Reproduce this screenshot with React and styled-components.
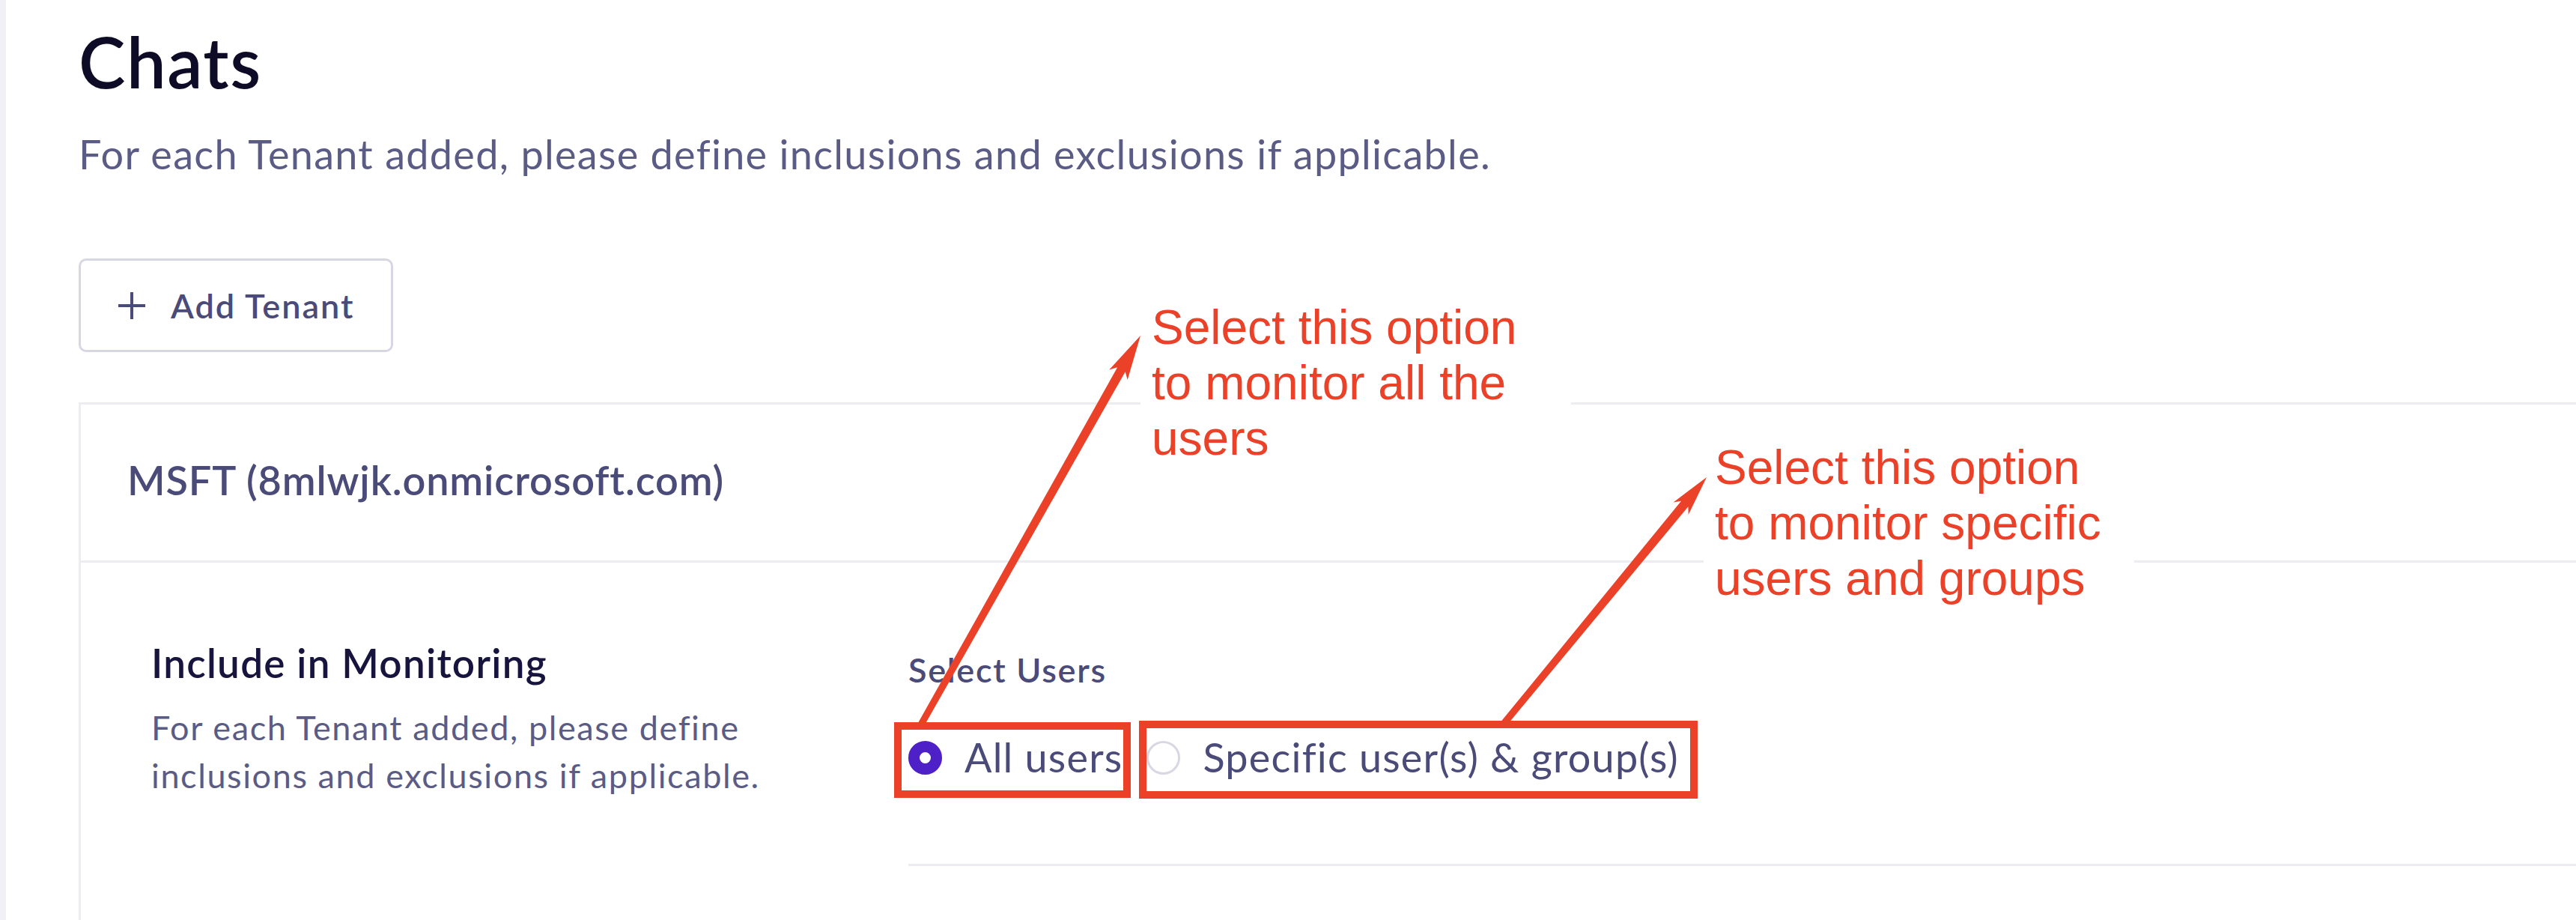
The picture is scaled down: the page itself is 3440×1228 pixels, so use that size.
import React from "react";
import styled, { createGlobalStyle } from "styled-components";

const GlobalStyle = createGlobalStyle`
  html, body { margin: 0; padding: 0; background: #ffffff; }
  body { font-family: "Lato", "Open Sans", sans-serif; -webkit-font-smoothing: antialiased; }
  * { box-sizing: border-box; }
`;

const Root = styled.div`
  position: relative;
  display: flex;
  width: 100%;
  height: 1228px;
  overflow: hidden;
  background: #ffffff;
`;

const SideStrip = styled.div`
  flex: 0 0 8px;
  background: #f0f0f6;
`;

const Main = styled.main`
  flex: 1;
  display: flex;
  flex-direction: column;
  align-items: flex-start;
  padding: 28px 0 0 97px;
  & > * { flex-shrink: 0; }
`;

const Title = styled.h1`
  margin: 0;
  font-size: 94px;
  line-height: 108px;
  letter-spacing: 1.5px;
  font-weight: 600;
  color: #0e0b26;
`;

const Subtitle = styled.p`
  margin: 39px 0 0;
  font-size: 54px;
  line-height: 62px;
  letter-spacing: 1.3px;
  font-weight: 400;
  color: #5b5c85;
`;

const AddButton = styled.button`
  margin-top: 108px;
  width: 420px;
  height: 125px;
  display: flex;
  align-items: center;
  gap: 33px;
  padding: 0 0 0 49px;
  background: #ffffff;
  border: 3px solid #d7d7e4;
  border-radius: 10px;
  font-family: inherit;
  font-size: 45px;
  letter-spacing: 2px;
  font-weight: 600;
  color: #4a4b79;
  cursor: pointer;
`;

const Card = styled.section`
  margin-top: 67px;
  align-self: stretch;
  background: #ffffff;
  border: 3px solid #ececf2;
  border-right: 0;
`;

const CardHeader = styled.header`
  padding: 70px 0 76px 62px;
  border-bottom: 3px solid #ececf2;
`;

const TenantName = styled.h2`
  margin: 0;
  font-size: 54px;
  line-height: 62px;
  letter-spacing: 0.9px;
  font-weight: 600;
  color: #4a4b79;
`;

const CardBody = styled.div`
  display: flex;
  align-items: flex-start;
  padding: 0 0 140px 94px;
`;

const InfoColumn = styled.div`
  flex: 0 0 1011px;
  padding-top: 104px;
`;

const SectionTitle = styled.h3`
  margin: 0;
  font-size: 53px;
  line-height: 60px;
  letter-spacing: 1.3px;
  font-weight: 600;
  color: #17143d;
`;

const SectionDesc = styled.p`
  margin: 24px 0 0;
  max-width: 900px;
  font-size: 45px;
  line-height: 64px;
  letter-spacing: 1.6px;
  font-weight: 400;
  color: #5b5c85;
`;

const FieldColumn = styled.div`
  flex: 1;
  padding: 116px 0 110px;
  border-bottom: 3px solid #ececf2;
`;

const FieldLabel = styled.div`
  font-size: 45px;
  line-height: 54px;
  letter-spacing: 1.7px;
  font-weight: 600;
  color: #4a4b79;
`;

const RadioGroup = styled.div`
  margin-top: 58px;
  display: flex;
  align-items: center;
  gap: 32px;
  height: 64px;
`;

const RadioOption = styled.label`
  display: flex;
  align-items: center;
  gap: 30px;
  cursor: pointer;
`;

const RadioDot = styled.span`
  flex: 0 0 45px;
  width: 45px;
  height: 45px;
  border-radius: 50%;
  background: #ffffff;
  border: ${(p) => (p.$checked ? "15px solid #4e20c8" : "3px solid #d8d8e4")};
`;

const RadioText = styled.span`
  font-size: 54px;
  line-height: 64px;
  letter-spacing: 1.2px;
  font-weight: 400;
  color: #4a4b79;
`;

const Note = styled.div`
  position: absolute;
  left: ${(p) => p.$x}px;
  top: ${(p) => p.$y}px;
  width: 575px;
  padding: 10px 15px 14px;
  background: #ffffff;
  font-family: "Liberation Sans", Arial, sans-serif;
  font-size: 64px;
  line-height: 74px;
  color: #ea4128;
`;

const Overlay = styled.svg`
  position: absolute;
  left: 0;
  top: 0;
  width: 3440px;
  height: 1228px;
  pointer-events: none;
`;

const RED = "#ea4128";

function arrowPoints(x1, y1, x2, y2, back, barb, notchBack, notch, shaft) {
  const dx = x2 - x1;
  const dy = y2 - y1;
  const len = Math.hypot(dx, dy);
  const ux = dx / len;
  const uy = dy / len;
  const nx = -uy;
  const ny = ux;
  const at = (a, b) => [x2 + ux * a + nx * b, y2 + uy * a + ny * b];
  const pts = [
    [x1 - nx * shaft, y1 - ny * shaft],
    at(-notchBack, -notch),
    at(-back, -barb),
    [x2, y2],
    at(-back, barb),
    at(-notchBack, notch),
    [x1 + nx * shaft, y1 + ny * shaft],
  ];
  return pts.map((p) => p.map((v) => v.toFixed(1)).join(",")).join(" ");
}

const PlusIcon = () => (
  <svg width="38" height="38" viewBox="0 0 38 38" aria-hidden="true">
    <path d="M19 1V37M1 19H37" stroke="#4a4b79" strokeWidth="4" fill="none" />
  </svg>
);

export default function App() {
  return (
    <Root>
      <GlobalStyle />
      <SideStrip />
      <Main>
        <Title>Chats</Title>
        <Subtitle>
          For each Tenant added, please define inclusions and exclusions if applicable.
        </Subtitle>
        <AddButton type="button">
          <PlusIcon />
          Add Tenant
        </AddButton>
        <Card>
          <CardHeader>
            <TenantName>MSFT (8mlwjk.onmicrosoft.com)</TenantName>
          </CardHeader>
          <CardBody>
            <InfoColumn>
              <SectionTitle>Include in Monitoring</SectionTitle>
              <SectionDesc>
                For each Tenant added, please define inclusions and exclusions if applicable.
              </SectionDesc>
            </InfoColumn>
            <FieldColumn>
              <FieldLabel>Select Users</FieldLabel>
              <RadioGroup>
                <RadioOption>
                  <RadioDot $checked />
                  <RadioText>All users</RadioText>
                </RadioOption>
                <RadioOption>
                  <RadioDot />
                  <RadioText>Specific user(s) &amp; group(s)</RadioText>
                </RadioOption>
              </RadioGroup>
            </FieldColumn>
          </CardBody>
        </Card>
      </Main>

      <Note $x={1523} $y={390}>
        Select this option
        <br />
        to monitor all the
        <br />
        users
      </Note>
      <Note $x={2275} $y={577}>
        Select this option
        <br />
        to monitor specific
        <br />
        users and groups
      </Note>

      <Overlay viewBox="0 0 3440 1228">
        <rect x="1199" y="969" width="306" height="91" fill="none" stroke={RED} strokeWidth="10" />
        <rect x="1526" y="967" width="736" height="94" fill="none" stroke={RED} strokeWidth="10" />
        <polygon points={arrowPoints(1230, 967, 1523, 448, 60, 14, 52, 6, 4.5)} fill={RED} />
        <polygon points={arrowPoints(2008, 966, 2279, 637, 54, 13, 46, 6, 4.5)} fill={RED} />
      </Overlay>
    </Root>
  );
}
